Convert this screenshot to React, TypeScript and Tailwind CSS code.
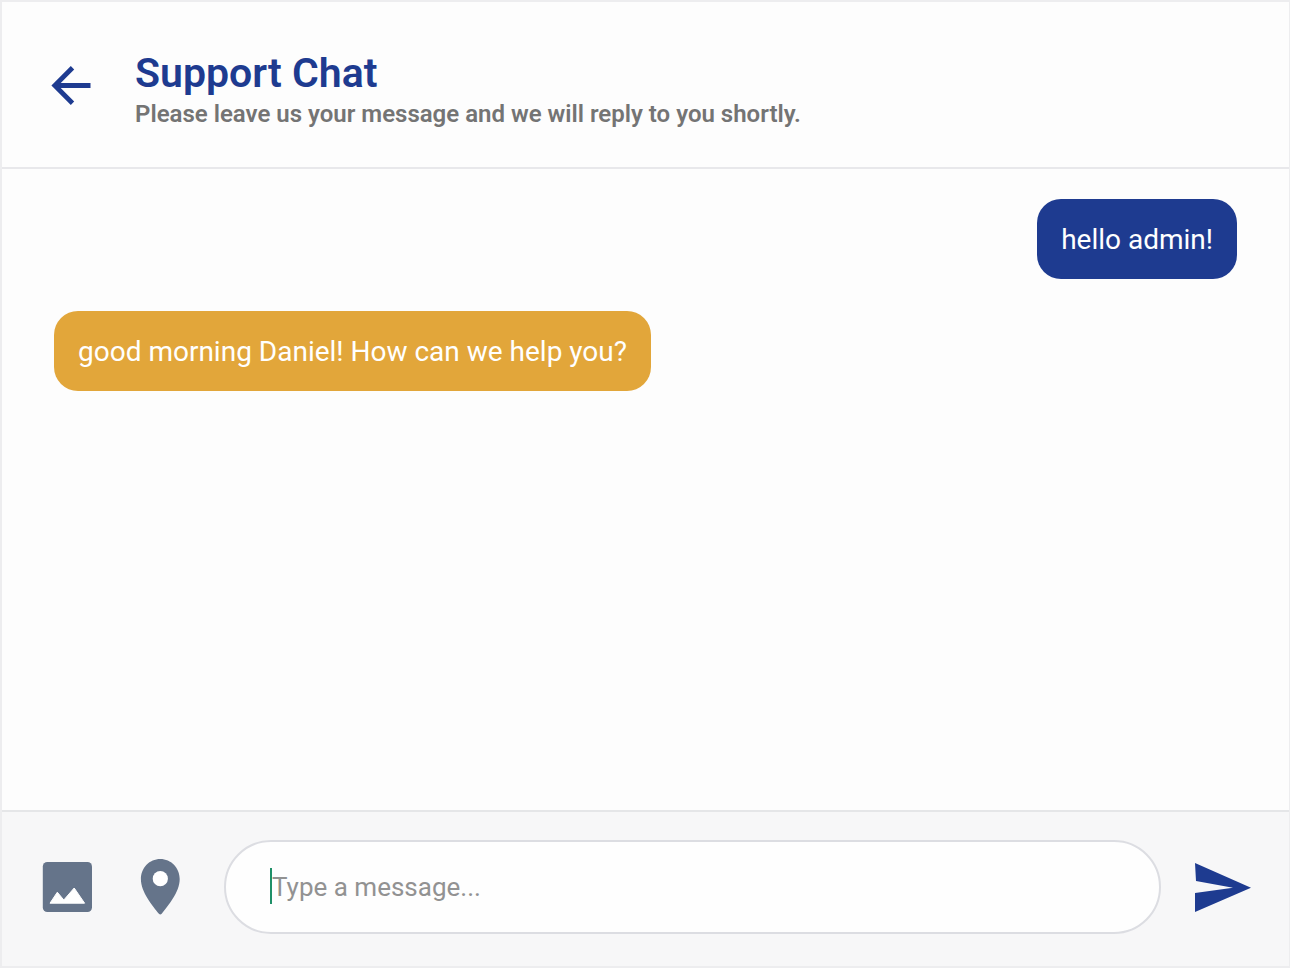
import React from "react";
import { clsx } from "clsx";

interface Message {
    id: number;
    from: "user" | "admin";
    text: string;
}

const MESSAGES: Message[] = [
    { id: 1, from: "user", text: "hello admin!" },
    { id: 2, from: "admin", text: "good morning Daniel! How can we help you?" },
];

const BackIcon = () => (
    <svg className="w-10 h-10" viewBox="0 0 40 40" fill="none" stroke="currentColor" strokeWidth="4.8" aria-hidden="true">
        <path d="M21.500 1.800 3.800 19.500l17.700 17.700" />
        <path d="M4 19.500h35.500" />
    </svg>
);

const ImageIcon = () => (
    <svg className="w-[50px] h-[50px]" viewBox="0 0 50 50" aria-hidden="true">
        <rect x="0.8" y="0" width="49.200" height="50" rx="4.500" fill="currentColor" />
        <path d="M8 41.200 15.300 30.200 21.800 38 32.200 26 42.600 41.200Z" fill="white" stroke="white" strokeWidth="1" strokeLinejoin="round" />
    </svg>
);

const PinIcon = () => (
    <svg className="w-10 h-14" viewBox="0 0 40 56" aria-hidden="true">
        <path
            d="M20.300 0C9.500 0 .9 8.800.9 20c0 13.200 11.600 26.800 18 34.700q1.400 1.400 2.800 0C28 46.800 39.700 33.200 39.700 20 39.700 8.800 31 0 20.300 0Z"
            fill="currentColor"
        />
        <circle cx="20.300" cy="19.700" r="7.600" fill="white" />
    </svg>
);

const SendIcon = () => (
    <svg className="w-[58px] h-[50px]" viewBox="0 0 58 50" fill="currentColor" aria-hidden="true">
        <path d="M1 1 57 25.700 1 50V31L39 25.700 2 19Z" />
    </svg>
);

const MessageBubble = ({ message }: { message: Message }) => (
    <li
        className={clsx(
            "rounded-3xl px-6 pt-[21px] pb-[19px] text-[28px] leading-10 text-white",
            message.from === "user" ? "self-end bg-[#1e3b90]" : "self-start bg-[#e2a63a]"
        )}
    >
        {message.text}
    </li>
);

export default function App() {
    return (
        <div className="flex min-h-screen flex-col border-2 border-r border-[#ededef] bg-[#fdfdfd] font-['Roboto',sans-serif]">
            {/* Header */}
            <header className="flex items-center gap-11 border-b-2 border-[#e8e8eb] px-[49px] pt-11 pb-[41px]">
                <button type="button" aria-label="Back" className="text-[#1e3b90]">
                    <BackIcon />
                </button>
                <div className="flex flex-col gap-0.5">
                    <h1 className="text-[41px] leading-[54px] font-semibold text-[#1e3b90]">Support Chat</h1>
                    <p className="text-2xl leading-6 font-semibold text-[#747474]">
                        Please leave us your message and we will reply to you shortly.
                    </p>
                </div>
            </header>

            {/* Conversation */}
            <main className="flex-1 px-[52px] py-[30px]">
                <ul className="flex flex-col gap-8">
                    {MESSAGES.map((message) => (
                        <MessageBubble key={message.id} message={message} />
                    ))}
                </ul>
            </main>

            {/* Composer */}
            <form
                className="flex items-center border-t-2 border-[#e5e6e8] bg-[#f7f7f8] pt-7 pr-[37px] pb-8 pl-10"
                onSubmit={(e) => e.preventDefault()}
            >
                <div className="mr-11 flex items-center gap-12 text-[#65748a]">
                    <button type="button" aria-label="Attach image">
                        <ImageIcon />
                    </button>
                    <button type="button" aria-label="Share location">
                        <PinIcon />
                    </button>
                </div>
                <div className="relative flex-1">
                    <input
                        type="text"
                        aria-label="Message"
                        placeholder="Type a message..."
                        className="h-[94px] w-full rounded-full border-2 border-[#dcdde2] bg-[#fefefe] px-[46px] text-[26px] text-gray-700 caret-[#1f9068] outline-none placeholder:text-[#929292]"
                    />
                    <span className="pointer-events-none absolute top-7 left-[46px] h-9 w-0.5 bg-[#1f9068]" />
                </div>
                <button type="submit" aria-label="Send" className="ml-[33px] text-[#1e3b90]">
                    <SendIcon />
                </button>
            </form>
        </div>
    );
}
